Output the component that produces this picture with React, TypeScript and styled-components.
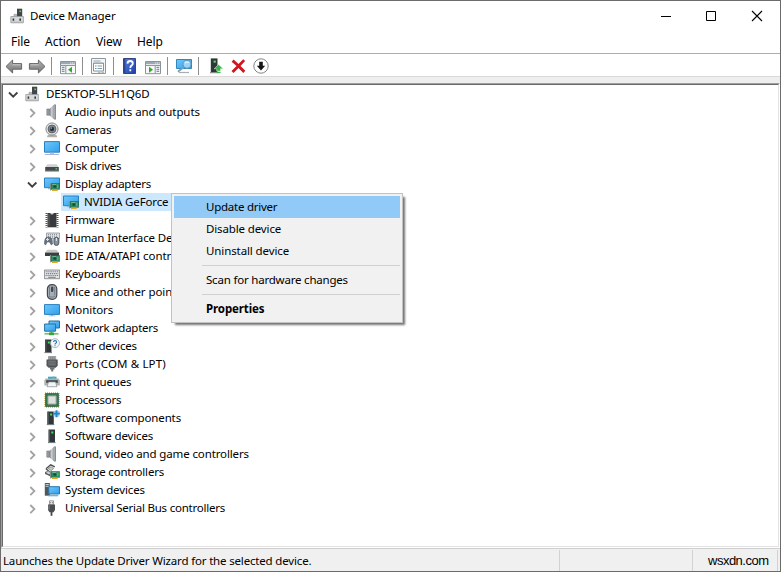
import React from 'react';
import styled, { createGlobalStyle, css } from 'styled-components';

const GlobalStyle = createGlobalStyle`
  * { box-sizing: border-box; }
  body { margin: 0; background: #fff; }
`;

const Window = styled.div`
  position: relative;
  display: flex;
  flex-direction: column;
  width: 781px;
  height: 572px;
  border: 1px solid #6b6b6b;
  background: #fff;
  color: #000;
  font: 11.5px/18px 'Noto Sans', 'Open Sans', sans-serif;
  white-space: nowrap;
  overflow: hidden;
`;

const Text = styled.span<{ $track?: number }>`
  letter-spacing: ${(p) => p.$track ?? 0}px;
`;

const TitleBar = styled.header`
  display: flex;
  align-items: center;
  flex: 0 0 30px;
  padding-left: 9px;
  gap: 4px;
`;

const Controls = styled.div`
  display: flex;
  margin-left: auto;
  height: 100%;
`;

const ControlButton = styled.button<{ $width?: number }>`
  display: flex;
  align-items: center;
  justify-content: center;
  width: ${(p) => p.$width ?? 46}px;
  padding: 0;
  border: 0;
  background: none;
`;

const MenuBar = styled.nav`
  display: flex;
  flex: 0 0 23px;
  align-items: center;
  padding-left: 10px;
  border-bottom: 1px solid #adadad;
  font-size: 12px;
`;

const MenuEntry = styled.span<{ $width: number; $track: number }>`
  width: ${(p) => p.$width}px;
  letter-spacing: ${(p) => p.$track}px;
`;

const Toolbar = styled.div`
  display: flex;
  flex: 0 0 23px;
  padding-top: 4px;
  border-bottom: 1px solid #d9d9d9;
`;

const Tool = styled.button<{ $gap: number }>`
  display: flex;
  width: 18px;
  height: 18px;
  margin: 0 0 0 ${(p) => p.$gap}px;
  padding: 0;
  border: 0;
  background: none;
`;

const Divider = styled.i<{ $gap: number }>`
  width: 1px;
  height: 18px;
  margin: -1px 0 0 ${(p) => p.$gap}px;
  background: #8e8e8e;
`;

const TreeFrame = styled.div`
  flex: 1;
  margin-top: 6px;
  border: 1px solid;
  border-color: #a0a0a0 #fff #fff #a0a0a0;
  box-shadow: 0 -6px 0 #eee;
`;

const Tree = styled.div`
  height: 100%;
  border: 1px solid;
  border-color: #696969 #e3e3e3 #e3e3e3 #696969;
`;

const Row = styled.div<{ $depth: number }>`
  display: flex;
  align-items: center;
  height: 18px;
  padding-left: ${(p) => 3 + p.$depth * 19}px;
`;

const Chevron = styled.svg`
  width: 16px;
  height: 16px;
  margin-right: 3px;
  fill: none;
`;

const Leaf = styled.div<{ $selected?: boolean }>`
  display: flex;
  align-items: center;
  height: 18px;
  gap: 5px;
  ${(p) =>
    p.$selected &&
    css`
      background: #cce8ff;
      padding: 0 4px 0 2px;
      margin-left: -2px;
    `}
`;

const Glyph = styled.svg<{ $size?: number }>`
  display: block;
  flex: none;
  width: ${(p) => p.$size ?? 16}px;
  height: ${(p) => p.$size ?? 16}px;
`;

const StatusBar = styled.footer`
  display: flex;
  flex: 0 0 23px;
  border-top: 1px solid #d0d0d0;
  background: #f0f0f0;
  padding: 1px 2px 0;
`;

const StatusPane = styled.div<{ $width: number }>`
  display: flex;
  align-items: center;
  width: ${(p) => p.$width}px;
  height: 21px;
  padding-top: 1px;
  border-right: 1px solid #d2d2d2;
`;

const SiteMark = styled.span`
  margin-left: 15px;
  font: 13px/18px 'Liberation Sans', Arial, sans-serif;
  letter-spacing: -0.5px;
`;

const ContextMenu = styled.div`
  position: absolute;
  left: 170px;
  top: 192px;
  width: 232px;
  height: 130px;
  padding: 2px;
  border: 1px solid #c2c2c2;
  background: #f1f1f1;
  box-shadow: 3px 3px 2px -1px rgba(0, 0, 0, 0.55);
`;

const MenuItem = styled.div<{ $active?: boolean; $bold?: boolean }>`
  height: 22px;
  padding-left: 32px;
  line-height: 22px;
  background: ${(p) => (p.$active ? '#91c9f7' : 'transparent')};
  font-weight: ${(p) => (p.$bold ? 700 : 400)};
`;

const MenuRule = styled.hr`
  height: 1px;
  margin: 3px 0 3px 28px;
  border: 0;
  background: #d0d0d0;
`;

const Defs = styled.svg`
  position: absolute;
  width: 0;
  height: 0;
`;

const Gradients = () => (
  <Defs>
    <defs>
      <linearGradient id="screen" x1="0" y1="0" x2="1" y2="1">
        <stop offset="0" stopColor="#6fc8fb" />
        <stop offset="1" stopColor="#2f9fea" />
      </linearGradient>
      <linearGradient id="metal" x1="0" y1="0" x2="1" y2="0">
        <stop offset="0" stopColor="#6d7276" />
        <stop offset=".55" stopColor="#d5d8da" />
        <stop offset="1" stopColor="#7b8084" />
      </linearGradient>
      <linearGradient id="arrow" x1="0" y1="0" x2="0" y2="1">
        <stop offset="0" stopColor="#b5b5b5" />
        <stop offset="1" stopColor="#747474" />
      </linearGradient>
      <linearGradient id="book" x1="0" y1="0" x2="1" y2="1">
        <stop offset="0" stopColor="#5a7fe0" />
        <stop offset="1" stopColor="#1d3fa8" />
      </linearGradient>
    </defs>
  </Defs>
);

const Board = () => (
  <g>
    <path d="M6.5 14.5V7" stroke="#9aa49d" />
    <path d="M7 7.5h8.6v5.9H7z" fill="#2f8a66" stroke="#1c5a42" strokeWidth=".5" />
    <path d="M9.4 9.3h2.8v2.4H9.4z" fill="#174d3b" />
    <path d="M13.8 8.5v3.8M8.3 8.5h4" stroke="#7ec29c" strokeWidth=".8" />
    <path d="M8 13.5h5.7V15H8z" fill="#e2a928" />
  </g>
);

const Speaker = () => (
  <g>
    <path d="M2.8 5h2.4v6.2H2.8z" fill="#9b9fa2" stroke="#70757a" strokeWidth=".6" />
    <path d="M5.2 5 10 .8v14.4l-4.8-4z" fill="url(#metal)" />
    <path d="M10 .5h1.9v15H10z" fill="#7b8186" />
    <path d="M9.6 1.2h1v13.6h-1z" fill="#c3c7c9" />
  </g>
);

const Tower = ({ x = 4.5 }: { x?: number }) => (
  <g transform={`translate(${x} 0)`}>
    <path d="M0 1.5h6.5v13H0z" fill="#30373a" />
    <path d="M.4 1.7h1v12.4h-1z" fill="#586063" />
    <path d="M2.8 3.5h2v2h-2z" fill="#45e052" />
    <path d="M-.5 14h7.5v1.1H-.5z" fill="#777d80" />
  </g>
);

const ICONS: Record<string, React.ReactNode> = {
  root: (
    <g>
      <path d="M7 .7h5.2v9H7z" fill="#414648" />
      <path d="M9.3 2.5h1.8v1.6H9.3z" fill="#67c95c" />
      <path d="M4 8.5V6.3h2.6v2.2" fill="#b8bdc0" stroke="#8d9295" strokeWidth=".6" />
      <path d="M.8 8.5h12.6v6.3H.8z" fill="#d6d8d9" stroke="#989c9e" strokeWidth=".8" />
      <path d="M2.6 10.5h1.6v2.2H2.6zM9.4 10.5H11v2.2H9.4z" fill="#33383a" />
      <path d="M1 14.2h12.2" stroke="#aeb0b1" />
    </g>
  ),
  audio: <Speaker />,
  camera: (
    <g>
      <path d="m3.8 13-1 2.2h10.6l-1-2.2" fill="#b9aea7" />
      <circle cx="8" cy="7" r="6.1" fill="#dfe1e3" stroke="#888d90" />
      <circle cx="8" cy="7" r="3.9" fill="#858c92" stroke="#595e62" />
      <circle cx="8" cy="7" r="2.2" fill="#273039" />
      <circle cx="7.2" cy="6.1" r=".8" fill="#a0b5c6" />
    </g>
  ),
  computer: (
    <g>
      <path d="M.5 1.6h15v10.6H.5z" fill="url(#screen)" stroke="#2a80bf" />
      <path d="M6 12.7h4v1.3H6z" fill="#b0c4da" />
      <path d="M1.5 13.9h13l1.2 1.2H.3z" fill="#b0b4d8" />
    </g>
  ),
  disk: (
    <g>
      <path d="M3.2 6.2h9.6L14.3 9H1.5z" fill="#cfd2d3" />
      <path d="M1.2 9h13.6v4.2H1.2z" fill="#45494b" />
      <path d="M1.2 12.5h13.6v1H1.2z" fill="#7e8284" />
      <path d="M11.5 10.2h1.7v1.2h-1.7z" fill="#57da68" />
    </g>
  ),
  display: (
    <g>
      <path d="M.5 2h15v9.7H.5z" fill="url(#screen)" stroke="#2a80bf" />
      <path d="M4 12h4v1.3H4z" fill="#9cbbd0" />
      <Board />
    </g>
  ),
  firmware: (
    <g>
      <path d="M2.5 1v14.5M13.5 1v14.5" stroke="#555" strokeWidth="2" strokeDasharray="1 1" />
      <path d="M3.5 1h9v14.3h-9z" fill="#393a3b" />
      <path d="M5 2v12" stroke="#606264" />
      <path d="M6.3 1h3.4a1.7 1.6 0 0 1-3.4 0" fill="#d0d0d0" />
    </g>
  ),
  hid: (
    <g>
      <path d="M2.5 3h13v5.8h-13z" fill="#dde0e3" stroke="#8b9299" strokeWidth=".8" />
      <path d="M4 4.6h10M4 6.3h10M4 8h10" stroke="#858b91" strokeDasharray="1 1" />
      <path
        d="M2.1 7.5q2.3-1.2 4.5 0 2.1 1.4 1.9 6.6l-1.2.8-2-3H3.2l-1.5 3L.4 14q.1-5.3 1.7-6.5z"
        fill="#68727c"
        stroke="#4e5962"
        strokeWidth=".5"
      />
      <path d="M2 9.5h3M3.5 8v3" stroke="#d6e2eb" />
      <rect x="10" y="7.4" width="4.8" height="8" rx="2.3" fill="#88929d" stroke="#48525c" />
      <path d="M12.4 8v3" stroke="#e7edf2" />
    </g>
  ),
  ide: (
    <g>
      <path d="M3.5 1.8h8.8l2.8 3H.8z" fill="#c5c8c9" />
      <path d="M1 4.6h14V8H1z" fill="#3b3e3f" />
      <Board />
    </g>
  ),
  keyboard: (
    <g>
      <path d="M.4 4h15.2v8.7H.4z" fill="#e1e3e5" stroke="#777c80" strokeWidth=".8" />
      <path d="M1.6 5.7h12.8M2.2 7.6h12M1.6 9.5h12.8" stroke="#777c81" strokeWidth="1.1" strokeDasharray="1.1 .8" />
      <path d="M4.2 11.3h7.5" stroke="#777c81" />
    </g>
  ),
  mouse: (
    <g>
      <rect x="3.4" y=".7" width="9.4" height="14.6" rx="4.3" fill="#a5adb5" stroke="#42494f" strokeWidth="1.2" />
      <path d="M5.5 2.8v8.7M10.7 2.8v8.7" stroke="#69737d" strokeWidth=".8" />
      <rect x="7" y="2.5" width="2.3" height="5.6" rx="1.1" fill="#3c4752" />
      <path d="M5 12.5q3 1.3 6 0" stroke="#78828c" fill="none" />
    </g>
  ),
  monitor: (
    <g>
      <path d="M.5 2.6h15v9.8H.5z" fill="url(#screen)" stroke="#2a80bf" />
      <path d="M7 12.9h2v.8H7zM4.5 13.5h7v.7h-7z" fill="#9bb3c5" />
    </g>
  ),
  network: (
    <g>
      <path d="M5 1h10.5v7H5z" fill="url(#screen)" stroke="#276f9f" />
      <path d="M.6 4h11v7.2h-11z" fill="url(#screen)" stroke="#276f9f" />
      <path d="M7.5 11.7v3" stroke="#44a648" strokeWidth="1.8" />
      <path d="M.5 13.8h14" stroke="#76c56c" strokeWidth="1.7" />
      <path d="M5 12.5h5v2.7H5z" fill="#3ca342" />
    </g>
  ),
  other: (
    <g>
      <Tower x={1} />
      <circle cx="11" cy="5.2" r="4.5" fill="#f2f6f9" stroke="#9ca8b2" strokeWidth=".8" />
      <path
        d="M9.5 4q.2-1.4 1.5-1.4 1.6 0 1.6 1.4 0 .7-.9 1.3-.7.4-.7 1.1M11 7.2v1.1"
        fill="none"
        stroke="#2477b8"
        strokeWidth="1.1"
      />
    </g>
  ),
  port: (
    <g>
      <path d="M4.5.5h7.2v3.2H4.5z" fill="#babcbd" stroke="#777" strokeWidth=".6" />
      <path d="M6.2.8v2.5M8.1.8v2.5M10 .8v2.5" stroke="#707375" />
      <path d="M2.5 3.5h11.2v6.2l-2 2h-7l-2.2-2z" fill="#515557" />
      <path d="M4.3 5.2h7.5M4.3 7h7.5M4.3 8.8h7.5" stroke="#7e8284" />
      <path d="M6 11.5h4.5v2H6zM7.2 13h2v2.6h-2z" fill="#6c7072" />
    </g>
  ),
  printer: (
    <g>
      <path d="M4 2.7h8.5v3H4z" fill="#3aa1db" />
      <path d="M8 2.7h3v2H8z" fill="#4bbf86" />
      <path d="M1.7 4.4h12.8l1.3 2.1v5H.3v-5z" fill="#aeb3b7" />
      <path d="M2.2 6.2h11.6v2.6H2.2z" fill="#404649" />
      <path d="M4.5 7.9h7l1.5 4.8H3z" fill="#f2f4f5" stroke="#838a8f" strokeWidth=".7" />
    </g>
  ),
  processor: (
    <g>
      <path d="M1 1h14v14H1z" fill="none" stroke="#bcae57" strokeWidth="1.3" strokeDasharray="1 1" />
      <path d="M1.6 1.6h12.8v12.8H1.6z" fill="#3a7952" stroke="#255d3b" strokeWidth=".8" />
      <path d="M4 4h8v8H4z" fill="#dfe1df" stroke="#a7ada9" />
    </g>
  ),
  component: (
    <g>
      <Tower x={3.3} />
      <path d="M9.5 1h6v5.6h-6z" fill="#9fccee" />
      <path d="M9 3.6h6.9M12.5.2v7" stroke="#2186cc" strokeWidth="1.9" />
    </g>
  ),
  device: <Tower />,
  storage: (
    <g>
      <path d="M2 4.8 6.7.8l4.1 2.1M2 4.8l3.5 3" stroke="#4d5052" strokeWidth="1.4" fill="none" />
      <path d="m4 4.4 3-1.7 2.8 1.7-2.5 2.3z" fill="#c7c9c9" stroke="#696c6d" strokeWidth=".6" />
      <path d="m1 8 3.4-1.4 5.5 4.2-2.2 2.1L1 10.1z" fill="#606465" />
      <path d="m2 8 2.4-.8L7.7 10H4z" fill="#cbcdcd" />
      <Board />
    </g>
  ),
  system: (
    <g>
      <path d="M.8 1h5v12.7h-5z" fill="#4f585d" />
      <path d="M1.5 2.5h3.3M1.5 4.3h3.3" stroke="#c0ced5" />
      <path d="M4.8 4.7h10.7V12H4.8z" fill="url(#screen)" stroke="#2678ad" />
      <path d="M3.8 13.7h10.4" stroke="#5aaee0" strokeWidth="1.2" />
    </g>
  ),
  usb: (
    <g>
      <path d="M5.5.8h4v4h-4z" fill="#e6e8e9" stroke="#777" strokeWidth=".7" />
      <path d="M6.3 2.2h.8v1h-.8zM8.1 2.2h.8v1h-.8z" fill="#555" />
      <path d="M4 4.6h7v5.3l-1.5 2.3h-4L4 9.9z" fill="#4b4e50" />
      <path d="M5 5.2v4.5" stroke="#888c8e" />
      <path d="M6.6 12h1.8v3.8H6.6z" fill="#424547" />
    </g>
  ),
};

type Device = [icon: string, label: string, track: number];

const DEVICES: Device[] = [
  ['audio', 'Audio inputs and outputs', -0.09],
  ['camera', 'Cameras', -0.15],
  ['computer', 'Computer', -0.06],
  ['disk', 'Disk drives', -0.2],
  ['display', 'Display adapters', -0.26],
  ['firmware', 'Firmware', -0.18],
  ['hid', 'Human Interface Devices', -0.12],
  ['ide', 'IDE ATA/ATAPI controllers', -0.05],
  ['keyboard', 'Keyboards', -0.16],
  ['mouse', 'Mice and other pointing devices', -0.07],
  ['monitor', 'Monitors', -0.08],
  ['network', 'Network adapters', -0.26],
  ['other', 'Other devices', -0.17],
  ['port', 'Ports (COM & LPT)', 0.14],
  ['printer', 'Print queues', -0.2],
  ['processor', 'Processors', -0.23],
  ['component', 'Software components', -0.13],
  ['device', 'Software devices', -0.15],
  ['audio', 'Sound, video and game controllers', -0.13],
  ['storage', 'Storage controllers', -0.2],
  ['system', 'System devices', -0.13],
  ['usb', 'Universal Serial Bus controllers', -0.23],
];

const TreeIcon = ({ name }: { name: string }) => <Glyph viewBox="0 0 16 16">{ICONS[name]}</Glyph>;

const Expander = ({ open }: { open?: boolean }) => (
  <Chevron viewBox="0 0 16 16">
    {open ? (
      <path d="m3 6.5 4.2 4.2 4.2-4.2" stroke="#404040" strokeWidth="1.8" />
    ) : (
      <path d="m5.3 5 4.1 4.1-4.1 4.1" stroke="#a2a2a2" strokeWidth="1.8" />
    )}
  </Chevron>
);

const ConsolePane = ({ flipped }: { flipped?: boolean }) => (
  <g>
    <path d="M1.5 3.5h15v12.2h-15z" fill="#f5f7f8" stroke="#88939b" />
    <path d="M2 4h14v2.2H2z" fill="#9aa9b4" />
    <path d="M11.3 5h1M13.2 5h1M15 5h.6" stroke="#fff" />
    <path d="M2 7.5h14" stroke="#8b969e" />
    {flipped ? (
      <g>
        <path d="M11.2 8v7.5" stroke="#8b969e" />
        <path d="M12.5 9.3h2.7M12.5 11.3h2.7M12.5 13.3h2.7" stroke="#687b89" />
        <path d="m5 8.7 4 3-4 3z" fill="#36a52c" />
      </g>
    ) : (
      <g>
        <path d="M6.8 8v7.5" stroke="#8b969e" />
        <path d="M2.8 9.3h2.7M2.8 11.3h2.7M2.8 13.3h2.7" stroke="#687b89" />
        <path d="m13 8.7-4 3 4 3z" fill="#36a52c" />
      </g>
    )}
  </g>
);

const ToolIcon = ({ gap, label, children }: { gap: number; label: string; children: React.ReactNode }) => (
  <Tool $gap={gap} aria-label={label}>
    <Glyph viewBox="0 0 18 18" $size={18}>
      {children}
    </Glyph>
  </Tool>
);

export default function App() {
  return (
    <Window>
      <GlobalStyle />
      <Gradients />
      <TitleBar>
        <TreeIcon name="root" />
        <Text $track={-0.12}>Device Manager</Text>
        <Controls>
          <ControlButton $width={44} aria-label="Minimize">
            <Glyph viewBox="0 0 16 16">
              <path d="M3 8.5h10" stroke="#000" />
            </Glyph>
          </ControlButton>
          <ControlButton aria-label="Maximize">
            <Glyph viewBox="0 0 16 16">
              <path d="M3.5 3.5h9v9h-9z" fill="none" stroke="#000" />
            </Glyph>
          </ControlButton>
          <ControlButton aria-label="Close">
            <Glyph viewBox="0 0 16 16">
              <path d="m3 3 10 10M13 3 3 13" stroke="#000" strokeWidth="1.1" />
            </Glyph>
          </ControlButton>
        </Controls>
      </TitleBar>
      <MenuBar>
        <MenuEntry $width={34} $track={-0.05}>File</MenuEntry>
        <MenuEntry $width={51} $track={0}>Action</MenuEntry>
        <MenuEntry $width={41} $track={-0.1}>View</MenuEntry>
        <MenuEntry $width={40} $track={-0.1}>Help</MenuEntry>
      </MenuBar>
      <Toolbar>
        <ToolIcon gap={4} label="Back">
          <path d="M1 8.5 7.6 2v3.6h9v5.6h-9V15z" fill="url(#arrow)" stroke="#666" />
          <path d="M7.5 6.8h8" stroke="#c8c8c8" />
        </ToolIcon>
        <ToolIcon gap={5} label="Forward">
          <path d="M17 8.5 10.4 2v3.6h-9v5.6h9V15z" fill="url(#arrow)" stroke="#666" />
          <path d="M2.5 6.8h8" stroke="#c8c8c8" />
        </ToolIcon>
        <Divider $gap={5} />
        <ToolIcon gap={7} label="Show console tree">
          <ConsolePane />
        </ToolIcon>
        <Divider $gap={5} />
        <ToolIcon gap={7} label="Properties">
          <path d="M1.5.5h14v15h-14z" fill="#f5f6f7" stroke="#8d969c" />
          <path d="M3.5 3h7" stroke="#99a1a6" />
          <path d="M3.5 5h10v8h-10z" fill="#fff" stroke="#87949d" />
          <path d="M4 5.5h9" stroke="#99a9b4" />
          <path d="M5 8h1.5M5 10.5h1.5" stroke="#3d9fd1" />
          <path d="M7.5 8h4.7M7.5 10.5h4.7" stroke="#8d979e" />
          <path d="M8 14.3h2.5M11.5 14.3H14" stroke="#a8afb4" />
        </ToolIcon>
        <Divider $gap={5} />
        <ToolIcon gap={7} label="Help">
          <path d="M2.5.5h12v15h-12z" fill="url(#book)" stroke="#31477d" />
          <path d="M3.8 1v14" stroke="#213979" />
          <path
            d="M6.5 5.6Q6.6 3 9.2 3q2.6 0 2.6 2.4 0 1.3-1.3 2.2-1.2.8-1.2 2.4M9.3 11.3v2"
            fill="none"
            stroke="#fff"
            strokeWidth="1.8"
          />
        </ToolIcon>
        <ToolIcon gap={5} label="Show action pane">
          <ConsolePane flipped />
        </ToolIcon>
        <Divider $gap={5} />
        <ToolIcon gap={7} label="Scan for hardware changes">
          <path d="M1.5 1.5h15v9h-15z" fill="url(#screen)" stroke="#3187bc" />
          <path d="M4 14.5h10" stroke="#a6adb5" strokeWidth="1.2" />
          <path d="m9.3 8.8-6.4 5" stroke="#7f9db4" strokeWidth="1.8" />
          <circle cx="12" cy="6.3" r="4" fill="#a9dcf8" fillOpacity=".85" stroke="#5d97bd" />
          <path d="M10 5q1.5-1.7 3.6-.5" stroke="#fff" fill="none" />
        </ToolIcon>
        <Divider $gap={5} />
        <ToolIcon gap={9} label="Update driver">
          <path d="M2.8.4h6.7v13.8H2.8z" fill="#303638" />
          <path d="M5.6 2.6h2.2v2H5.6z" fill="#5ee065" />
          <path d="M2 14.2h8.2v1H2z" fill="#777" />
          <path d="m10.6 6.5 4.5 4.3h-2.6v2.3H8.7v-2.3H6.1z" fill="#36b443" stroke="#e2f6e4" strokeWidth=".5" />
          <path d="M8.7 14.4h3.8" stroke="#36b443" strokeWidth="1.3" />
        </ToolIcon>
        <ToolIcon gap={4} label="Uninstall device">
          <path
            d="M3.6 1.6 8.5 6.1l4.7-4.8 1.9 1.7-4.6 5 4.8 4.7-2 2.3-4.8-5-5 5-2-1.9 5.1-5L1.6 3.7z"
            fill="#d4141d"
          />
        </ToolIcon>
        <ToolIcon gap={4} label="Disable device">
          <circle cx="9" cy="8" r="7.2" fill="#fff" stroke="#858585" />
          <path d="M7.2 3.8h3.6v4h2.4L9 12.4 4.8 7.8h2.4z" fill="#151515" />
        </ToolIcon>
      </Toolbar>
      <TreeFrame>
        <Tree>
          <Row $depth={0}>
            <Expander open />
            <Leaf>
              <TreeIcon name="root" />
              <Text $track={-0.15}>DESKTOP-5LH1Q6D</Text>
            </Leaf>
          </Row>
          {DEVICES.map(([icon, label, track]) => (
            <React.Fragment key={label}>
              <Row $depth={1}>
                <Expander open={icon === 'display'} />
                <Leaf>
                  <TreeIcon name={icon} />
                  <Text $track={track}>{label}</Text>
                </Leaf>
              </Row>
              {icon === 'display' && (
                <Row $depth={3}>
                  <Leaf $selected>
                    <TreeIcon name="display" />
                    <Text $track={-0.15}>NVIDIA GeForce</Text>
                  </Leaf>
                </Row>
              )}
            </React.Fragment>
          ))}
        </Tree>
      </TreeFrame>
      <StatusBar>
        <StatusPane $width={557}>
          <Text $track={-0.17}>Launches the Update Driver Wizard for the selected device.</Text>
        </StatusPane>
        <StatusPane $width={133} />
        <StatusPane $width={85}>
          <SiteMark>wsxdn.com</SiteMark>
        </StatusPane>
      </StatusBar>
      <ContextMenu>
        <MenuItem $active>
          <Text $track={-0.24}>Update driver</Text>
        </MenuItem>
        <MenuItem>
          <Text $track={-0.13}>Disable device</Text>
        </MenuItem>
        <MenuItem>
          <Text $track={-0.1}>Uninstall device</Text>
        </MenuItem>
        <MenuRule />
        <MenuItem>
          <Text $track={-0.2}>Scan for hardware changes</Text>
        </MenuItem>
        <MenuRule />
        <MenuItem $bold>
          <Text $track={-0.12}>Properties</Text>
        </MenuItem>
      </ContextMenu>
    </Window>
  );
}
